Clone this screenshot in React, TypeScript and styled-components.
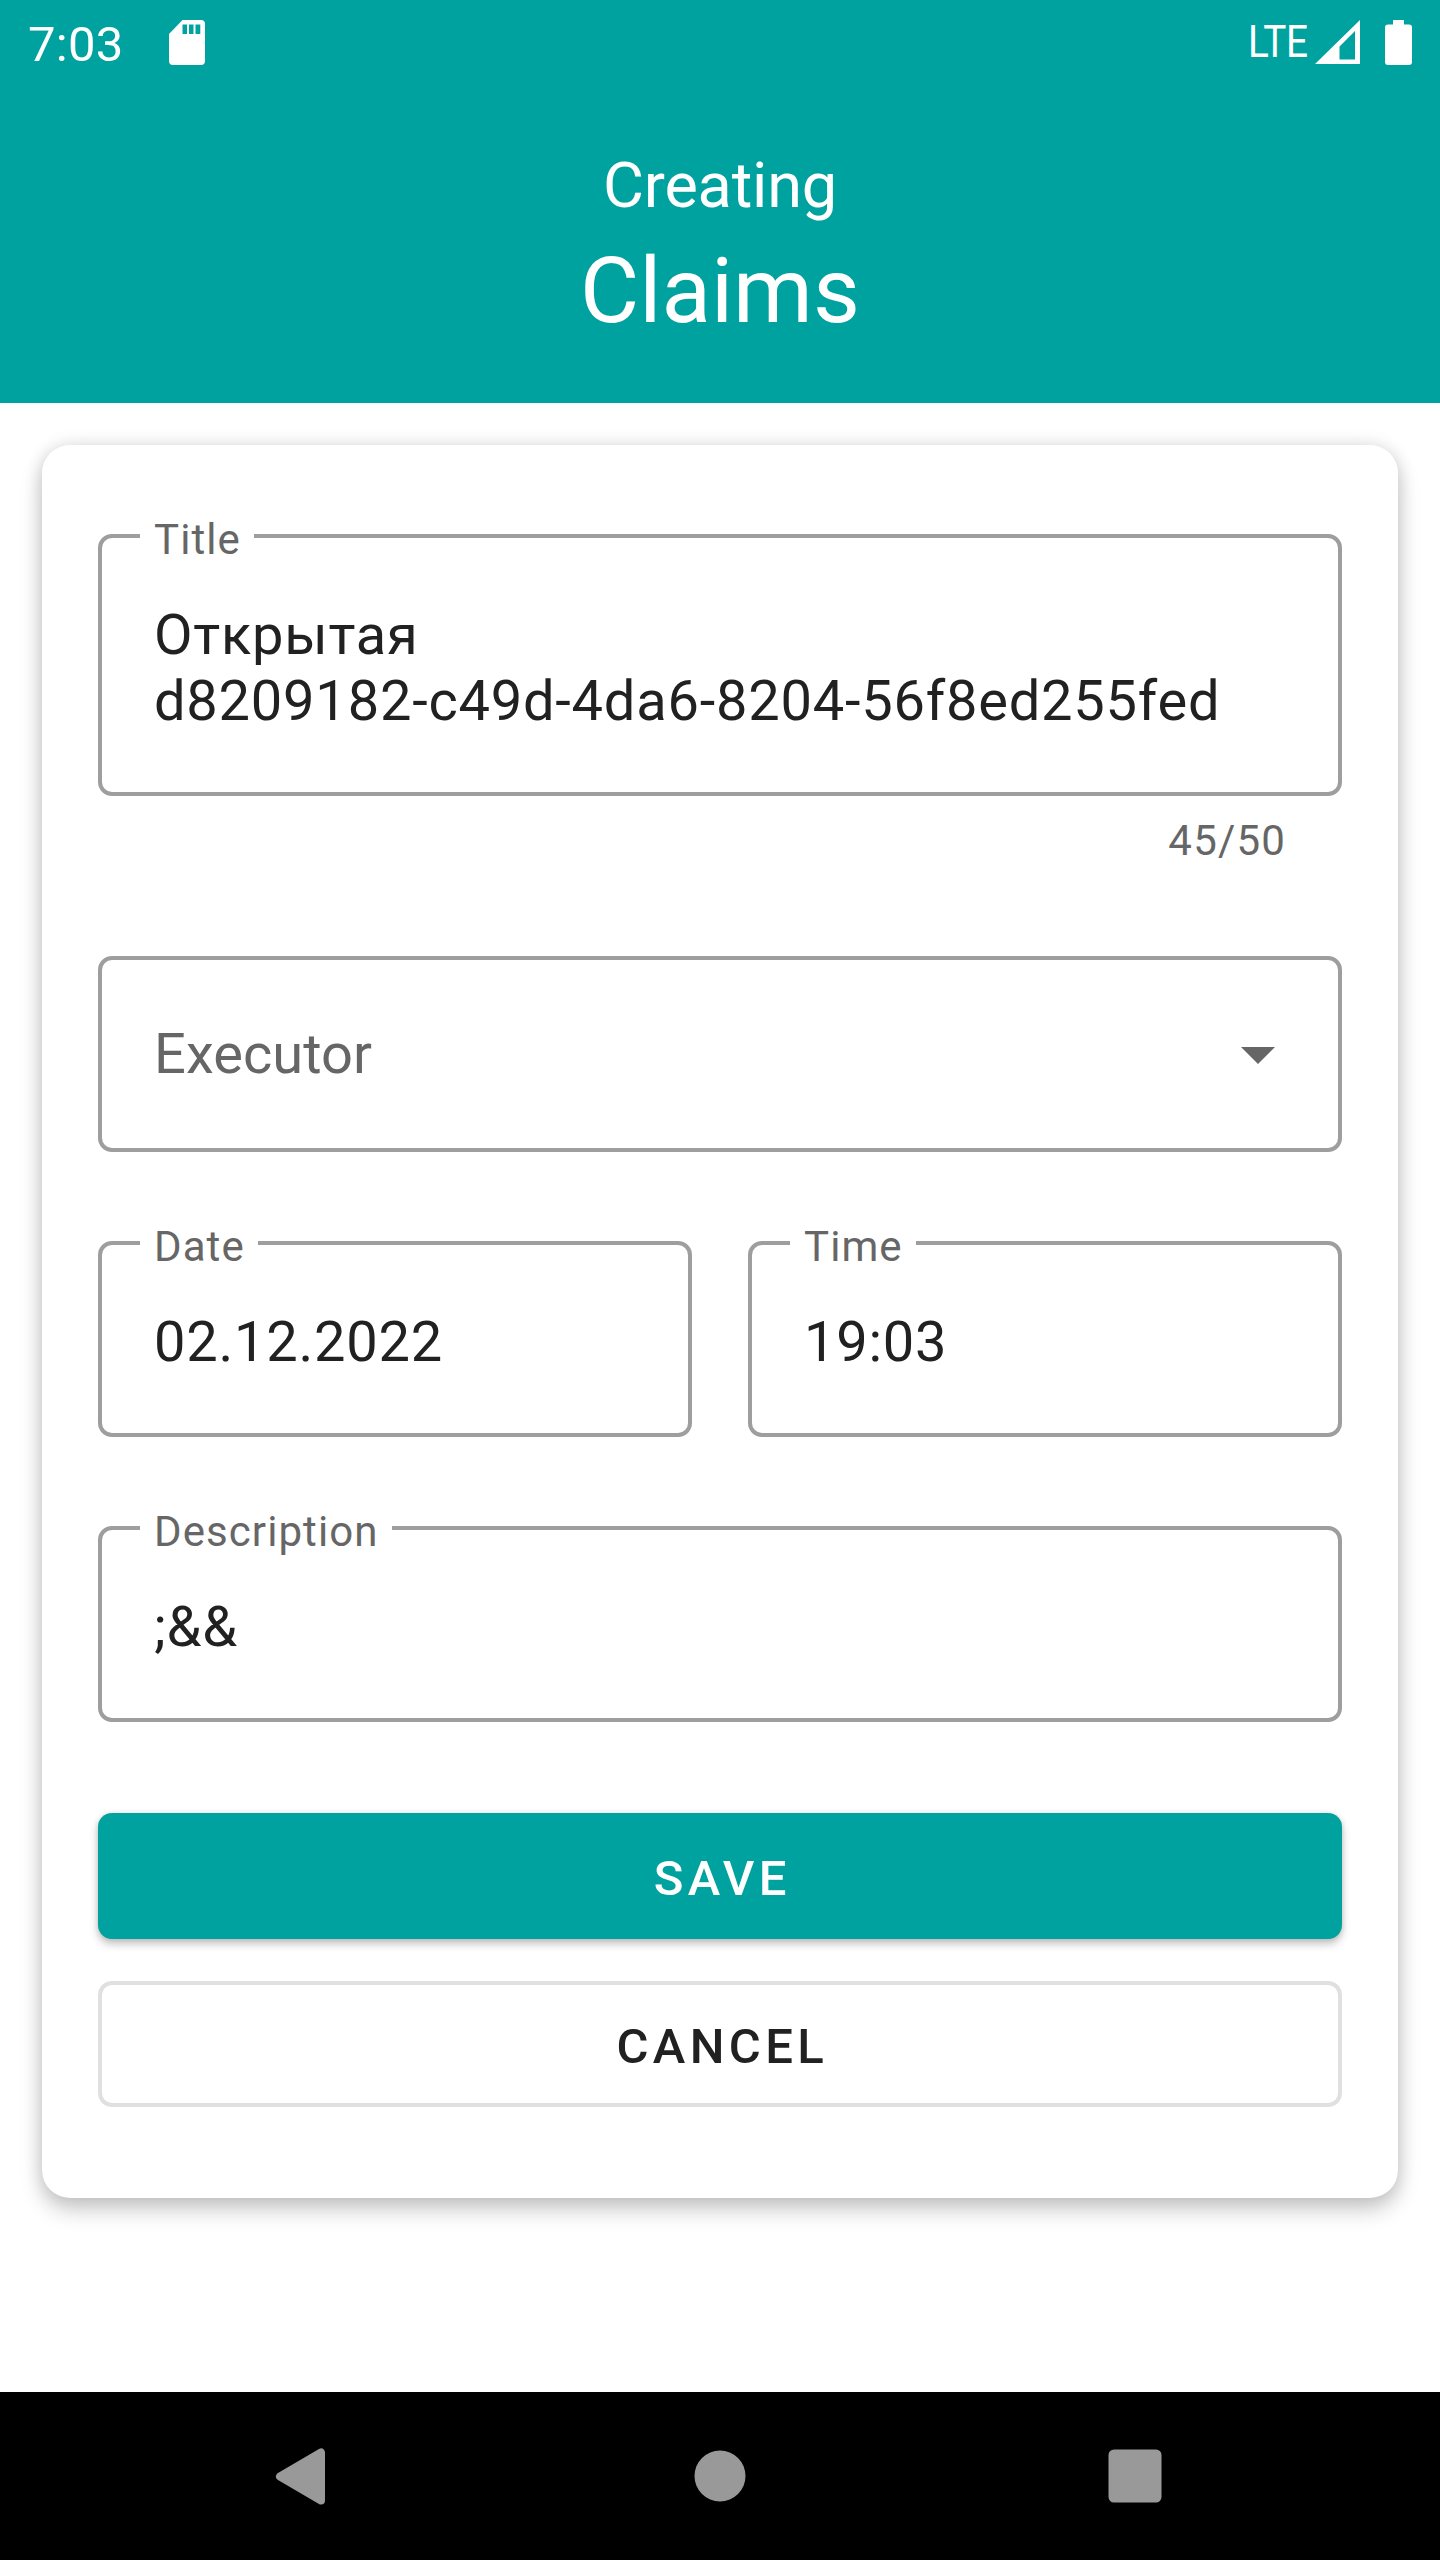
import React from "react";
import styled, { createGlobalStyle } from "styled-components";

const GlobalStyle = createGlobalStyle`
  *, *::before, *::after { box-sizing: border-box; }
  html, body { margin: 0; padding: 0; background: #fff; }
  body { font-family: Roboto, "Noto Sans", sans-serif; }
`;

const Screen = styled.div`
  display: flex;
  flex-direction: column;
  width: 1440px;
  height: 2560px;
  background: #fff;
  overflow: hidden;
`;

const AppBar = styled.header`
  display: flex;
  flex-direction: column;
  height: 403px;
  background: #00a2a0;
  color: #fff;
`;

const StatusBar = styled.div`
  display: flex;
  justify-content: space-between;
  height: 84px;
  padding: 0 28px;
`;

const StatusGroup = styled.div`
  display: flex;
  align-items: center;
`;

const Clock = styled.span`
  font-size: 49px;
  line-height: 58px;
  letter-spacing: 0.3px;
  margin: 5px 45px 0 0;
`;

const Network = styled.span`
  font-size: 44px;
  line-height: 52px;
  letter-spacing: -0.5px;
  margin-right: 7px;
  transform: scaleX(0.88);
  transform-origin: right center;
`;

const Heading = styled.div`
  display: flex;
  flex-direction: column;
  align-items: center;
  padding-top: 65px;
`;

const Subtitle = styled.span`
  font-size: 63px;
  line-height: 74px;
  letter-spacing: -0.2px;
`;

const PageTitle = styled.h1`
  margin: 15px 0 0;
  font-size: 91px;
  font-weight: 400;
  line-height: 107px;
`;

const Content = styled.main`
  flex: 1;
  padding: 42px;
`;

const Card = styled.form`
  display: flex;
  flex-direction: column;
  height: 1753px;
  padding: 89px 56px 0;
  border-radius: 28px;
  background: #fff;
  box-shadow: 0 12px 22px rgba(0, 0, 0, 0.2), 0 0 18px rgba(0, 0, 0, 0.12);
`;

const Field = styled.div<{ $tall?: boolean; $select?: boolean }>`
  position: relative;
  display: flex;
  flex: 1 1 0;
  justify-content: space-between;
  height: ${(p) => (p.$tall ? 262 : 196)}px;
  padding: ${(p) => (p.$select ? 61 : 64)}px 52px 0;
  border: 4px solid #9e9e9e;
  border-radius: 14px;
`;

const Label = styled.label`
  position: absolute;
  top: -23px;
  left: 38px;
  padding: 0 13px 0 14px;
  background: #fff;
  color: #666;
  font-size: 42px;
  line-height: 50px;
  letter-spacing: 1.08px;
  white-space: nowrap;
`;

const Value = styled.div<{ $hint?: boolean }>`
  color: ${(p) => (p.$hint ? "#666" : "#212121")};
  font-size: 56px;
  line-height: 66px;
  letter-spacing: ${(p) => (p.$hint ? 0.05 : 0.78)}px;
  white-space: pre-line;
`;

const Counter = styled.div`
  align-self: flex-end;
  height: 160px;
  padding: 20px 56px 0 0;
  color: #666;
  font-size: 42px;
  line-height: 50px;
  letter-spacing: 1.18px;
`;

const Row = styled.div<{ $top?: number }>`
  display: flex;
  flex: none;
  gap: 56px;
  margin-top: ${(p) => p.$top ?? 0}px;
`;

const Button = styled.button<{ $primary?: boolean }>`
  flex: none;
  height: 126px;
  margin: ${(p) => (p.$primary ? 91 : 42)}px 0 0;
  padding: 6px 0 0;
  border: ${(p) => (p.$primary ? "none" : "4px solid #e0e0e0")};
  border-radius: 14px;
  background: ${(p) => (p.$primary ? "#00a2a0" : "#fff")};
  box-shadow: ${(p) => (p.$primary ? "0 5px 9px rgba(0, 0, 0, 0.24), 0 0 5px rgba(0, 0, 0, 0.1)" : "none")};
  color: ${(p) => (p.$primary ? "#fff" : "#212121")};
  font: 500 49px/58px Roboto, "Noto Sans", sans-serif;
  letter-spacing: 4.375px;
  text-indent: 4.500px;
`;

const NavBar = styled.nav`
  display: flex;
  align-items: center;
  justify-content: space-between;
  height: 168px;
  padding: 0 278px 0 275px;
  background: #000;
`;

const HomeIcon = styled.svg`
  margin-left: 6px;
`;

const Caret = styled.svg`
  flex: none;
  width: 34px;
  height: 17px;
  margin: 26px 11px 0 0;
`;

const BatteryIcon = styled.svg`
  margin-left: 25px;
`;

const SdCard = () => (
  <svg width="36" height="45" viewBox="0 0 36 45">
    <path
      fill="#fff"
      fillRule="evenodd"
      d="M13.5 0H32a4 4 0 0 1 4 4v37a4 4 0 0 1-4 4H4a4 4 0 0 1-4-4V14zM13.5 4.5V14H18V4.5zM20 4.5V14h4.500V4.500zM26.500 4.500V14H31.300V4.500z"
    />
  </svg>
);

const Signal = () => (
  <svg width="45" height="44" viewBox="0 0 45 44">
    <path fill="#fff" fillRule="evenodd" d="M45 0V44H0zM40 11L24.500 26.500V39.500H40z" />
  </svg>
);

const Battery = () => (
  <BatteryIcon width="27" height="45" viewBox="0 0 27 45">
    <path fill="#fff" d="M8 0H19V4.500H24a3 3 0 0 1 3 3V42a3 3 0 0 1-3 3H3a3 3 0 0 1-3-3V7.500a3 3 0 0 1 3-3H8z" />
  </BatteryIcon>
);

type TextFieldProps = { label: string; value: string; tall?: boolean };

const TextField = ({ label, value, tall }: TextFieldProps) => (
  <Field $tall={tall}>
    <Label>{label}</Label>
    <Value>{value}</Value>
  </Field>
);

export default function App() {
  return (
    <>
      <GlobalStyle />
      <Screen>
        <AppBar>
          <StatusBar>
            <StatusGroup>
              <Clock>7:03</Clock>
              <SdCard />
            </StatusGroup>
            <StatusGroup>
              <Network>LTE</Network>
              <Signal />
              <Battery />
            </StatusGroup>
          </StatusBar>
          <Heading>
            <Subtitle>Creating</Subtitle>
            <PageTitle>Claims</PageTitle>
          </Heading>
        </AppBar>
        <Content>
          <Card>
            <Row>
              <TextField tall label="Title" value={"Открытая\nd8209182-c49d-4da6-8204-56f8ed255fed"} />
            </Row>
            <Counter>45/50</Counter>
            <Row>
              <Field $select>
                <Value $hint>Executor</Value>
                <Caret viewBox="0 0 34 17">
                  <path fill="#666" d="M0 0H34L17 17z" />
                </Caret>
              </Field>
            </Row>
            <Row $top={89}>
              <TextField label="Date" value="02.12.2022" />
              <TextField label="Time" value="19:03" />
            </Row>
            <Row $top={89}>
              <TextField label="Description" value=";&&" />
            </Row>
            <Button type="button" $primary>SAVE</Button>
            <Button type="button">CANCEL</Button>
          </Card>
        </Content>
        <NavBar>
          <svg width="51" height="57" viewBox="0 0 51 57">
            <path
              fill="#999"
              stroke="#999"
              strokeWidth="8"
              strokeLinejoin="round"
              d="M5 28.500L46 4.500V52.500z"
            />
          </svg>
          <HomeIcon width="52" height="52" viewBox="0 0 52 52">
            <circle cx="26" cy="26" r="25.500" fill="#999" />
          </HomeIcon>
          <svg width="54" height="54" viewBox="0 0 54 54">
            <rect x=".5" y=".5" width="53" height="53" rx="5.500" fill="#999" />
          </svg>
        </NavBar>
      </Screen>
    </>
  );
}
